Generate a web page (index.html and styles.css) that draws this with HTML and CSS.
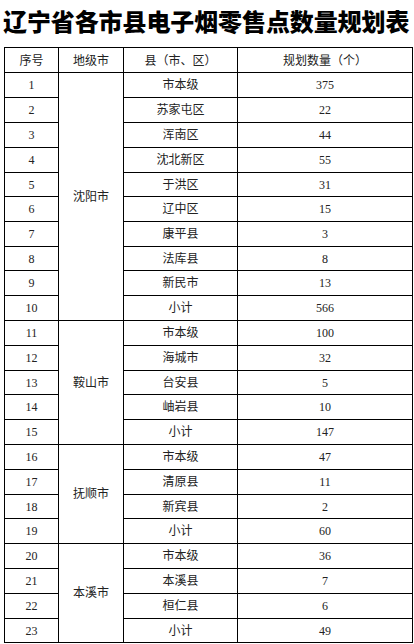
FILE: index.html
```html
<!DOCTYPE html>
<html lang="zh-CN">
<head>
<meta charset="utf-8">
<title>辽宁省各市县电子烟零售点数量规划表</title>
<link rel="stylesheet" href="styles.css">
</head>
<body>
<h1 class="title">辽宁省各市县电子烟零售点数量规划表</h1>
<table class="plan">
  <colgroup>
    <col class="c-no"><col class="c-city"><col class="c-county"><col class="c-num">
  </colgroup>
  <thead>
    <tr class="r25"><th>序号</th><th>地级市</th><th>县（市、区）</th><th>规划数量（个）</th></tr>
  </thead>
  <tbody>
    <tr class="r25"><td>1</td><td rowspan="10">沈阳市</td><td>市本级</td><td>375</td></tr>
    <tr class="r25"><td>2</td><td>苏家屯区</td><td>22</td></tr>
    <tr class="r25"><td>3</td><td>浑南区</td><td>44</td></tr>
    <tr class="r25"><td>4</td><td>沈北新区</td><td>55</td></tr>
    <tr class="r24"><td>5</td><td>于洪区</td><td>31</td></tr>
    <tr class="r25"><td>6</td><td>辽中区</td><td>15</td></tr>
    <tr class="r25"><td>7</td><td>康平县</td><td>3</td></tr>
    <tr class="r24"><td>8</td><td>法库县</td><td>8</td></tr>
    <tr class="r25"><td>9</td><td>新民市</td><td>13</td></tr>
    <tr class="r25"><td>10</td><td>小计</td><td>566</td></tr>
    <tr class="r25"><td>11</td><td rowspan="5">鞍山市</td><td>市本级</td><td>100</td></tr>
    <tr class="r25"><td>12</td><td>海城市</td><td>32</td></tr>
    <tr class="r24"><td>13</td><td>台安县</td><td>5</td></tr>
    <tr class="r25"><td>14</td><td>岫岩县</td><td>10</td></tr>
    <tr class="r25"><td>15</td><td>小计</td><td>147</td></tr>
    <tr class="r25"><td>16</td><td rowspan="4">抚顺市</td><td>市本级</td><td>47</td></tr>
    <tr class="r25"><td>17</td><td>清原县</td><td>11</td></tr>
    <tr class="r24"><td>18</td><td>新宾县</td><td>2</td></tr>
    <tr class="r25"><td>19</td><td>小计</td><td>60</td></tr>
    <tr class="r25"><td>20</td><td rowspan="4">本溪市</td><td>市本级</td><td>36</td></tr>
    <tr class="r25"><td>21</td><td>本溪县</td><td>7</td></tr>
    <tr class="r25"><td>22</td><td>桓仁县</td><td>6</td></tr>
    <tr class="r24"><td>23</td><td>小计</td><td>49</td></tr>
  </tbody>
</table>
</body>
</html>
```
FILE: styles.css
```css
html, body {
  margin: 0;
  padding: 0;
  background: #ffffff;
}

body {
  width: 414px;
  height: 644px;
  overflow: hidden;
}

.title {
  margin: 6px 0 11px 3px;
  font-family: "Noto Sans CJK SC", sans-serif;
  font-weight: 900;
  font-size: 24px;
  line-height: 30px;
  color: #000;
  white-space: nowrap;
  letter-spacing: -0.1px;
}

.plan {
  margin-left: 4px;
  border-collapse: collapse;
  table-layout: fixed;
  width: 408px;
  font-family: "Liberation Serif", "Noto Sans CJK SC", serif;
  font-size: 12px;
  color: #222;
}

.c-no { width: 54px; }
.c-city { width: 65px; }
.c-county { width: 114px; }
.c-num { width: 175px; }

.plan th,
.plan td {
  border: 1px solid #000;
  padding: 0;
  text-align: center;
  vertical-align: middle;
  font-weight: normal;
  line-height: 14px;
}

.plan th {
  font-family: "Noto Sans CJK SC", sans-serif;
}

.r25 { height: 25px; }
.r24 { height: 24px; }
```
